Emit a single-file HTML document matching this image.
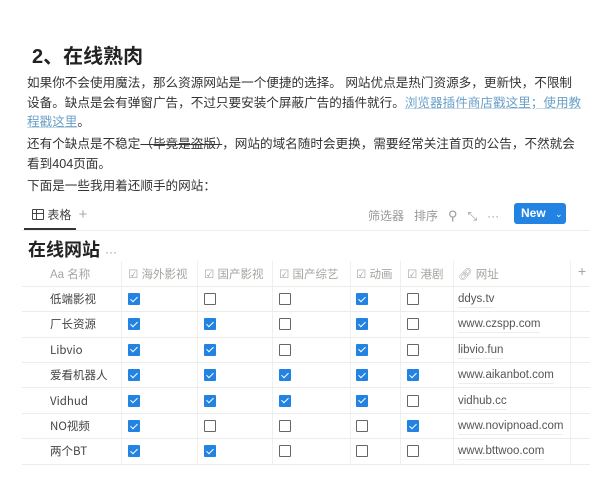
<!DOCTYPE html>
<html><head><meta charset="utf-8"><style>
body{margin:0;width:603px;height:500px;background:#fff;font-family:"Liberation Sans","Noto Sans CJK SC",sans-serif;color:#37352f;position:relative;overflow:hidden}
.a{position:absolute;white-space:nowrap}
h1{position:absolute;left:32px;top:40px;margin:0;font-size:20px;font-weight:bold;color:#222}
.p{position:absolute;left:27px;font-size:12.6px;line-height:19.5px;width:556px;color:#333}
.lnk{color:#6aa0c8;text-decoration:underline;text-decoration-color:#c8d9e6}
.cb{position:absolute;width:12px;height:12px;box-sizing:border-box;border:1.5px solid #666;border-radius:1px}
.cb.on{background:#2383e2;border:none}
.cb.on::after{content:"";position:absolute;left:3.5px;top:1.5px;width:3px;height:6px;border:solid #fff;border-width:0 1.5px 1.5px 0;transform:rotate(45deg)}
.hl{position:absolute;left:22px;width:568px;height:1px;background:#ececea}
.vl{position:absolute;top:261px;height:203px;width:1px;background:#efefed}
.hd{position:absolute;top:266px;font-size:11.5px;color:#a5a5a0}
.nm{position:absolute;left:50px;font-size:11.5px;line-height:16px;color:#444;font-family:"Noto Sans CJK SC",sans-serif}
.url{position:absolute;left:458px;font-size:11.5px;line-height:16px;color:#555;font-family:"Liberation Sans",sans-serif;border-bottom:1px solid #eee}
</style></head><body>
<h1>2、在线熟肉</h1>
<div class="p" style="top:74px">如果你不会使用魔法，那么资源网站是一个便捷的选择。 网站优点是热门资源多，更新快，不限制设备。缺点是会有弹窗广告，不过只要安装个屏蔽广告的插件就行。<span class="lnk">浏览器插件商店戳这里；使用教程戳这里</span>。</div>
<div class="p" style="top:135px">还有个缺点是不稳定<s>（毕竟是盗版）</s>，网站的域名随时会更换，需要经常关注首页的公告，不然就会看到404页面。</div>
<div class="p" style="top:177px">下面是一些我用着还顺手的网站：</div>
<div class="a" style="left:32px;top:206px;font-size:12px;color:#444"><span style="display:inline-block;width:10px;height:9px;border:1.3px solid #444;border-radius:1px;vertical-align:-1px;background:linear-gradient(#444,#444) 0 3px/100% 1px no-repeat,linear-gradient(#444,#444) 3px 0/1px 100% no-repeat"></span> 表格 <span style="color:#aaa;font-size:15px;margin-left:4px">+</span></div>
<div style="position:absolute;left:24px;top:228px;width:52px;height:2px;background:#37352f"></div>
<div class="hl" style="top:230px;background:#eee"></div>
<div class="a" style="left:368px;top:207px;font-size:12px;color:#999">筛选器&nbsp;&nbsp; 排序 &nbsp;&nbsp;<span style="font-size:13px">⚲</span>&nbsp;&nbsp; ⤡ &nbsp;&nbsp;···</div>
<div class="a" style="left:514px;top:203px;width:52px;height:21px;background:#2383e2;border-radius:3px;color:#fff;font-size:12px;font-weight:bold;line-height:21px;padding-left:7px;box-sizing:border-box">New <span style="font-weight:normal;font-size:9px;margin-left:6px">⌄</span></div>
<div class="a" style="left:28px;top:236px;font-size:18px;font-weight:bold;color:#222">在线网站 <span style="font-size:12px;color:#999;font-weight:normal">···</span></div>
<div class="hd" style="left:50px">Aa 名称</div>
<div class="hd" style="left:128px">☑ 海外影视</div>
<div class="hd" style="left:204px">☑ 国产影视</div>
<div class="hd" style="left:279px">☑ 国产综艺</div>
<div class="hd" style="left:356px">☑ 动画</div>
<div class="hd" style="left:407px">☑ 港剧</div>
<div class="hd" style="left:458px">🔗︎ 网址</div>
<div class="hd" style="left:578px;font-size:14px;top:263px">+</div>
<div class="vl" style="left:121px"></div><div class="vl" style="left:197px"></div><div class="vl" style="left:272px"></div><div class="vl" style="left:350px"></div><div class="vl" style="left:400px"></div><div class="vl" style="left:453px"></div><div class="vl" style="left:570px"></div>
<div class="hl" style="top:286px"></div><div class="hl" style="top:311px"></div><div class="hl" style="top:337px"></div><div class="hl" style="top:362px"></div><div class="hl" style="top:387px"></div><div class="hl" style="top:413px"></div><div class="hl" style="top:438px"></div><div class="hl" style="top:464px"></div>
<div id="rows"></div>
<script>
var d=[["低端影视",[1,0,0,1,0],"ddys.tv"],["厂长资源",[1,1,0,1,0],"www.czspp.com"],["Libvio",[1,1,0,1,0],"libvio.fun"],["爱看机器人",[1,1,1,1,1],"www.aikanbot.com"],["Vidhud",[1,1,1,1,0],"vidhub.cc"],["NO视频",[1,0,0,0,1],"www.novipnoad.com"],["两个BT",[1,1,0,0,0],"www.bttwoo.com"]];
var xs=[128,204,279,356,407],h="";
d.forEach(function(r,i){var y=291+i*25.4;h+='<div class="nm" style="top:'+y+'px">'+r[0]+'</div>';r[1].forEach(function(c,j){h+='<div class="cb'+(c?' on':'')+'" style="left:'+xs[j]+'px;top:'+(y+2)+'px"></div>'});h+='<div class="url" style="top:'+y+'px">'+r[2]+'</div>'});
document.getElementById("rows").innerHTML=h;
</script>
</body></html>
